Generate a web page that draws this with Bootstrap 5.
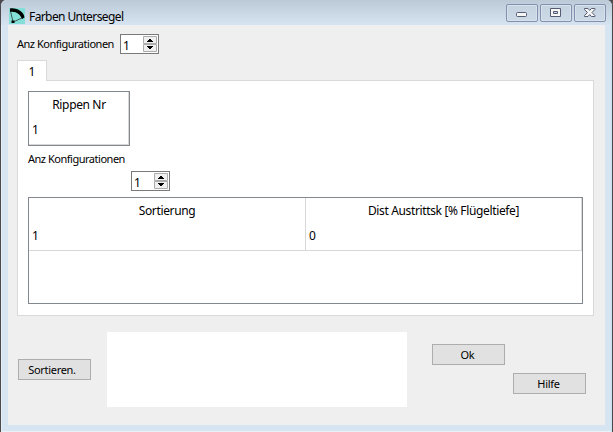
<!DOCTYPE html>
<html lang="de">
<head>
<meta charset="utf-8">
<meta name="viewport" content="width=device-width, initial-scale=1">
<title>Farben Untersegel</title>
<link href="https://cdn.jsdelivr.net/npm/bootstrap@5.3.0/dist/css/bootstrap.min.css" rel="stylesheet">
<style>
html, body { height: 432px; overflow: hidden; background: #4b494c; }
body { font: 12px/16px "Noto Sans", "Open Sans", sans-serif; color: #000; }
.window-frame { width: 613px; height: 432px; padding: 0 7px 6px; background: #d7e4f1; border: solid #4b494c; border-width: 0 1px 0 1px; border-radius: 6px 6px 0 0; box-shadow: inset 1px 0 #e8f0f7, inset -1px 0 #c3e4ee, inset 0 -1px #e9f2f7; }
.title-bar { height: 25px; margin: 0 -7px; padding: 0 6px 0 8px; background: linear-gradient(#bccad8, #d6e3f0); border-radius: 6px 6px 0 0; }
.app-icon { margin-top: 8px; }
.title-text { margin: 9px 0 0 4px; letter-spacing: -.6px; }
.caption-group { column-gap: 2px; }
.caption-btn { width: 32px; height: 18px; border: 1px solid #8390b0; border-radius: 2px; background: linear-gradient(#c5d2df, #cddae7); box-shadow: inset 0 0 0 1px #d6e1ec; padding: 0; display: block; }
.caption-btn svg { display: block; }
.client-area { height: 400px; background: #efefef; padding: 9px 11px 0 9px; }
.config-row { width: 142px; height: 26px; }
.ui-label { font-size: 11px; line-height: 14px; letter-spacing: -.48px; white-space: nowrap; }
.conf-label { margin-top: 3px; }
.sub-label { margin-top: 6px; }
.spin-box { width: 39px; height: 20px; border: 1px solid #7a7a7a; background: #fff; padding: 1px 1px 1px 3px; }
.sub-spin { margin: 5px 0 6px 103px; }
.spin-value { line-height: 20px; font-size: 12px; margin-left: -1px; }
.spin-keys { width: 14px; height: 16px; display: block; }
.tab-head { width: 30px; height: 21px; background: #fff; border: 1px solid #d9d9d9; border-bottom: 0; margin-bottom: -1px; position: relative; line-height: 22px; }
.tab-panel { width: 577px; height: 236px; border: 1px solid #d9d9d9; background: #fff; padding: 10px; }
.grid-box { border: 1px solid #828790; }
.rib-grid { width: 102px; height: 55px; box-shadow: inset -1px -1px #d8d8d8; }
.sort-grid { width: 555px; height: 107px; }
.grid-cells { display: grid; grid-template-columns: 277px 276px; grid-template-rows: 24px 29px; }
.grid-cells > div { border-right: 1px solid #d8d8d8; }
.grid-cells > .grid-value { border-bottom: 1px solid #d8d8d8; }
.grid-head { height: 24px; line-height: 25px; text-align: center; letter-spacing: -.36px; }
.grid-value { height: 29px; line-height: 28px; padding-left: 3px; }
.push-btn { width: 73px; height: 21px; border: 1px solid #adadad; background: #e1e1e1; padding: 0; line-height: 20px; letter-spacing: -.3px; font-size: 11px; color: #000; text-align: center; }
.message-area { width: 300px; height: 75px; background: #fff; }
.action-row { padding-top: 16px; }
.sort-btn { margin: 27px 16px 0 1px; padding-right: 5px; }
.ok-btn { margin: 12px 8px 0 25px; padding-right: 2px; }
.help-btn { margin-top: 41px; padding-right: 2px; }
</style>
</head>
<body>
<div class="window-frame">
  <header class="title-bar d-flex align-items-start">
    <svg class="app-icon" width="16" height="16" viewBox="0 0 16 16"><path fill="#84dfd8" d="M0 0h16v16H0z"/><path d="M1 .5C8-.5 15 4 15.500 9.500L13 11C11 6 7 3 1 4Z"/><path d="M1.500 3L4 14M13 10L4 14" fill="none" stroke="#222" stroke-width=".7"/><path d="M2.500 12.500h3v2.500h-3z"/></svg>
    <span class="title-text">Farben Untersegel</span>
    <div class="caption-group d-flex ms-auto mt-1">
      <button class="caption-btn" aria-label="Minimieren"><svg width="30" height="16" viewBox="0 0 30 16"><rect x="9.500" y="7.500" width="10" height="4" rx="1" fill="#f6f6f6" stroke="#555b70"/></svg></button>
      <button class="caption-btn" aria-label="Maximieren"><svg width="30" height="16" viewBox="0 0 30 16"><path d="M9.500 3.500h10v8h-10zM12.500 6.500v2h4v-2z" fill="#f6f6f6" fill-rule="evenodd" stroke="#555b70"/></svg></button>
      <button class="caption-btn" aria-label="Schließen"><svg width="30" height="16" viewBox="0 0 30 16"><path d="M9.500 3.500h3.500l1.700 1.900 1.700-1.900h3.500v1L17 7.500l2.900 3v1h-3.500l-1.700-1.900-1.700 1.900H9.500v-1l2.900-3-2.900-3z" fill="#f6f6f6" stroke="#555b70"/></svg></button>
    </div>
  </header>
  <main class="client-area">
    <div class="config-row d-flex align-items-start">
      <span class="ui-label conf-label">Anz Konfigurationen</span>
      <div class="spin-box d-flex justify-content-between ms-auto"><span class="spin-value">1</span><svg class="spin-keys" viewBox="0 0 14 16"><path d="M.5.500h13v7H.500zM.500 8.500h13v7H.500z" fill="#f0f0f0" stroke="#adadad"/><path d="M6 3h2v1h1v1h1v1H4V5h1V4h1zM4 10h6v1H9v1H8v1H6v-1H5v-1H4z"/></svg></div>
    </div>
    <div class="tab-head text-center">1</div>
    <section class="tab-panel">
      <div class="grid-box rib-grid"><div class="grid-head">Rippen Nr</div><div class="grid-value">1</div></div>
      <div class="ui-label sub-label">Anz Konfigurationen</div>
      <div class="spin-box sub-spin d-flex justify-content-between"><span class="spin-value">1</span><svg class="spin-keys" viewBox="0 0 14 16"><path d="M.5.500h13v7H.500zM.500 8.500h13v7H.500z" fill="#f0f0f0" stroke="#adadad"/><path d="M6 3h2v1h1v1h1v1H4V5h1V4h1zM4 10h6v1H9v1H8v1H6v-1H5v-1H4z"/></svg></div>
      <div class="grid-box sort-grid"><div class="grid-cells">
        <div class="grid-head">Sortierung</div><div class="grid-head">Dist Austrittsk [% Flügeltiefe]</div>
        <div class="grid-value">1</div><div class="grid-value">0</div>
      </div></div>
    </section>
    <footer class="action-row d-flex align-items-start">
      <button class="push-btn sort-btn">Sortieren.</button>
      <div class="message-area"></div>
      <button class="push-btn ok-btn">Ok</button>
      <button class="push-btn help-btn">Hilfe</button>
    </footer>
  </main>
</div>
<script src="https://cdn.jsdelivr.net/npm/bootstrap@5.3.0/dist/js/bootstrap.bundle.min.js"></script>
</body>
</html>
